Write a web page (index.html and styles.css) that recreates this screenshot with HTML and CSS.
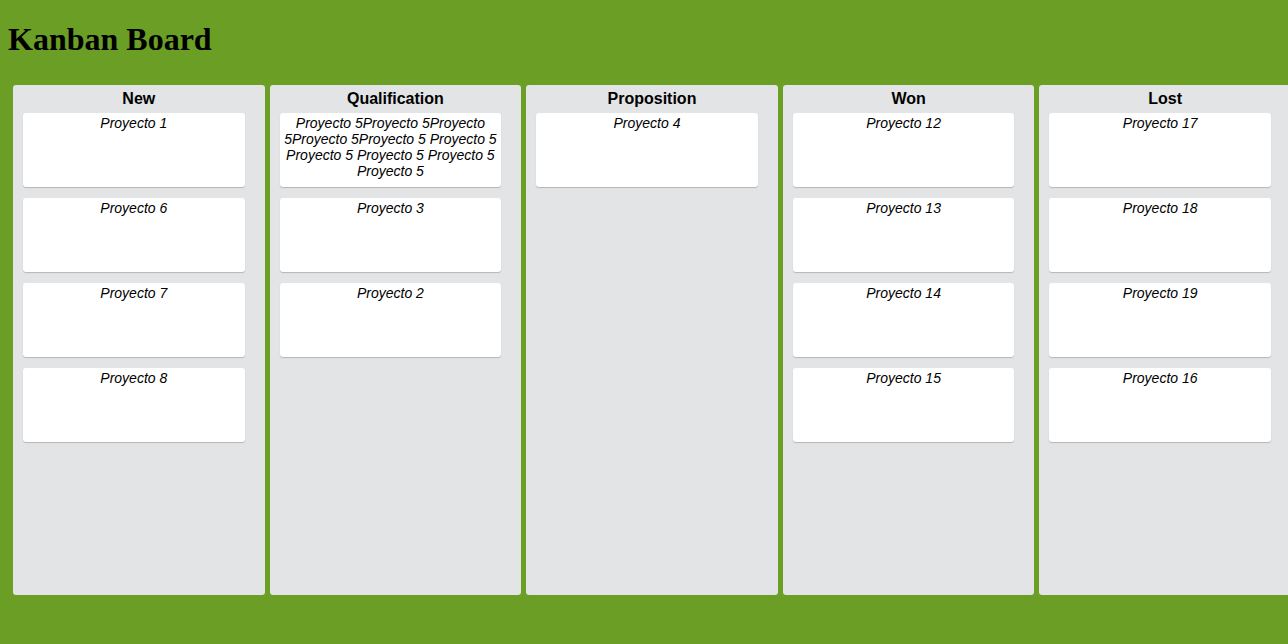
FILE: index.html
```html
<!DOCTYPE html>
<html lang="es">
<head>
    <meta charset="UTF-8">
    <meta name="viewport" content="width=device-width, initial-scale=1.0">
    <title>Kanban Board</title>
    <link rel="stylesheet" href="styles.css">
</head>
<body>
    <h1 class="title">Kanban Board</h1>

    <div class="board">
        <div class="column">
            <div class="column-title">New</div>
            <div class="cards">
                <div class="card">Proyecto 1</div>
                <div class="card">Proyecto 6</div>
                <div class="card">Proyecto 7</div>
                <div class="card">Proyecto 8</div>
            </div>
        </div>

        <div class="column">
            <div class="column-title">Qualification</div>
            <div class="cards">
                <div class="card">Proyecto 5Proyecto 5Proyecto 5Proyecto 5Proyecto 5 Proyecto 5 Proyecto 5 Proyecto 5 Proyecto 5 Proyecto 5</div>
                <div class="card">Proyecto 3</div>
                <div class="card">Proyecto 2</div>
            </div>
        </div>

        <div class="column">
            <div class="column-title">Proposition</div>
            <div class="cards">
                <div class="card">Proyecto 4</div>
            </div>
        </div>

        <div class="column">
            <div class="column-title">Won</div>
            <div class="cards">
                <div class="card">Proyecto 12</div>
                <div class="card">Proyecto 13</div>
                <div class="card">Proyecto 14</div>
                <div class="card">Proyecto 15</div>
            </div>
        </div>

        <div class="column">
            <div class="column-title">Lost</div>
            <div class="cards">
                <div class="card">Proyecto 17</div>
                <div class="card">Proyecto 18</div>
                <div class="card">Proyecto 19</div>
                <div class="card">Proyecto 16</div>
            </div>
        </div>
    </div>
</body>
</html>
```

FILE: styles.css
```css
html {
    overflow: hidden;
    background: #6b9e24;
}

body {
    margin: 0;
    font-family: 'Liberation Serif', 'Times New Roman', serif;
}

.title {
    font-size: 32px;
    font-weight: bold;
    line-height: 37px;
    margin: 0;
    padding: 21px 8px 0;
}

.board {
    display: flex;
    gap: 5px;
    padding: 27px 0 5px 13px;
}

.column {
    flex: 0 0 251.6px;
    height: 510px;
    background: #e2e4e6;
    border-radius: 3px;
    font-family: 'Liberation Sans', Arial, sans-serif;
}

.column-title {
    padding-top: 5px;
    margin-bottom: 5px;
    font-size: 16px;
    line-height: 18px;
    font-weight: bold;
    text-align: center;
}

.cards {
    display: flex;
    flex-direction: column;
    gap: 11px;
    padding: 0 20px 0 10px;
}

.card {
    height: 74px;
    box-sizing: border-box;
    padding: 2px 4px;
    background: #fff;
    border-radius: 3px;
    box-shadow: 0 1px 1px rgba(0, 0, 0, 0.2);
    font-size: 14px;
    line-height: 16px;
    font-style: italic;
    text-align: center;
}
```
